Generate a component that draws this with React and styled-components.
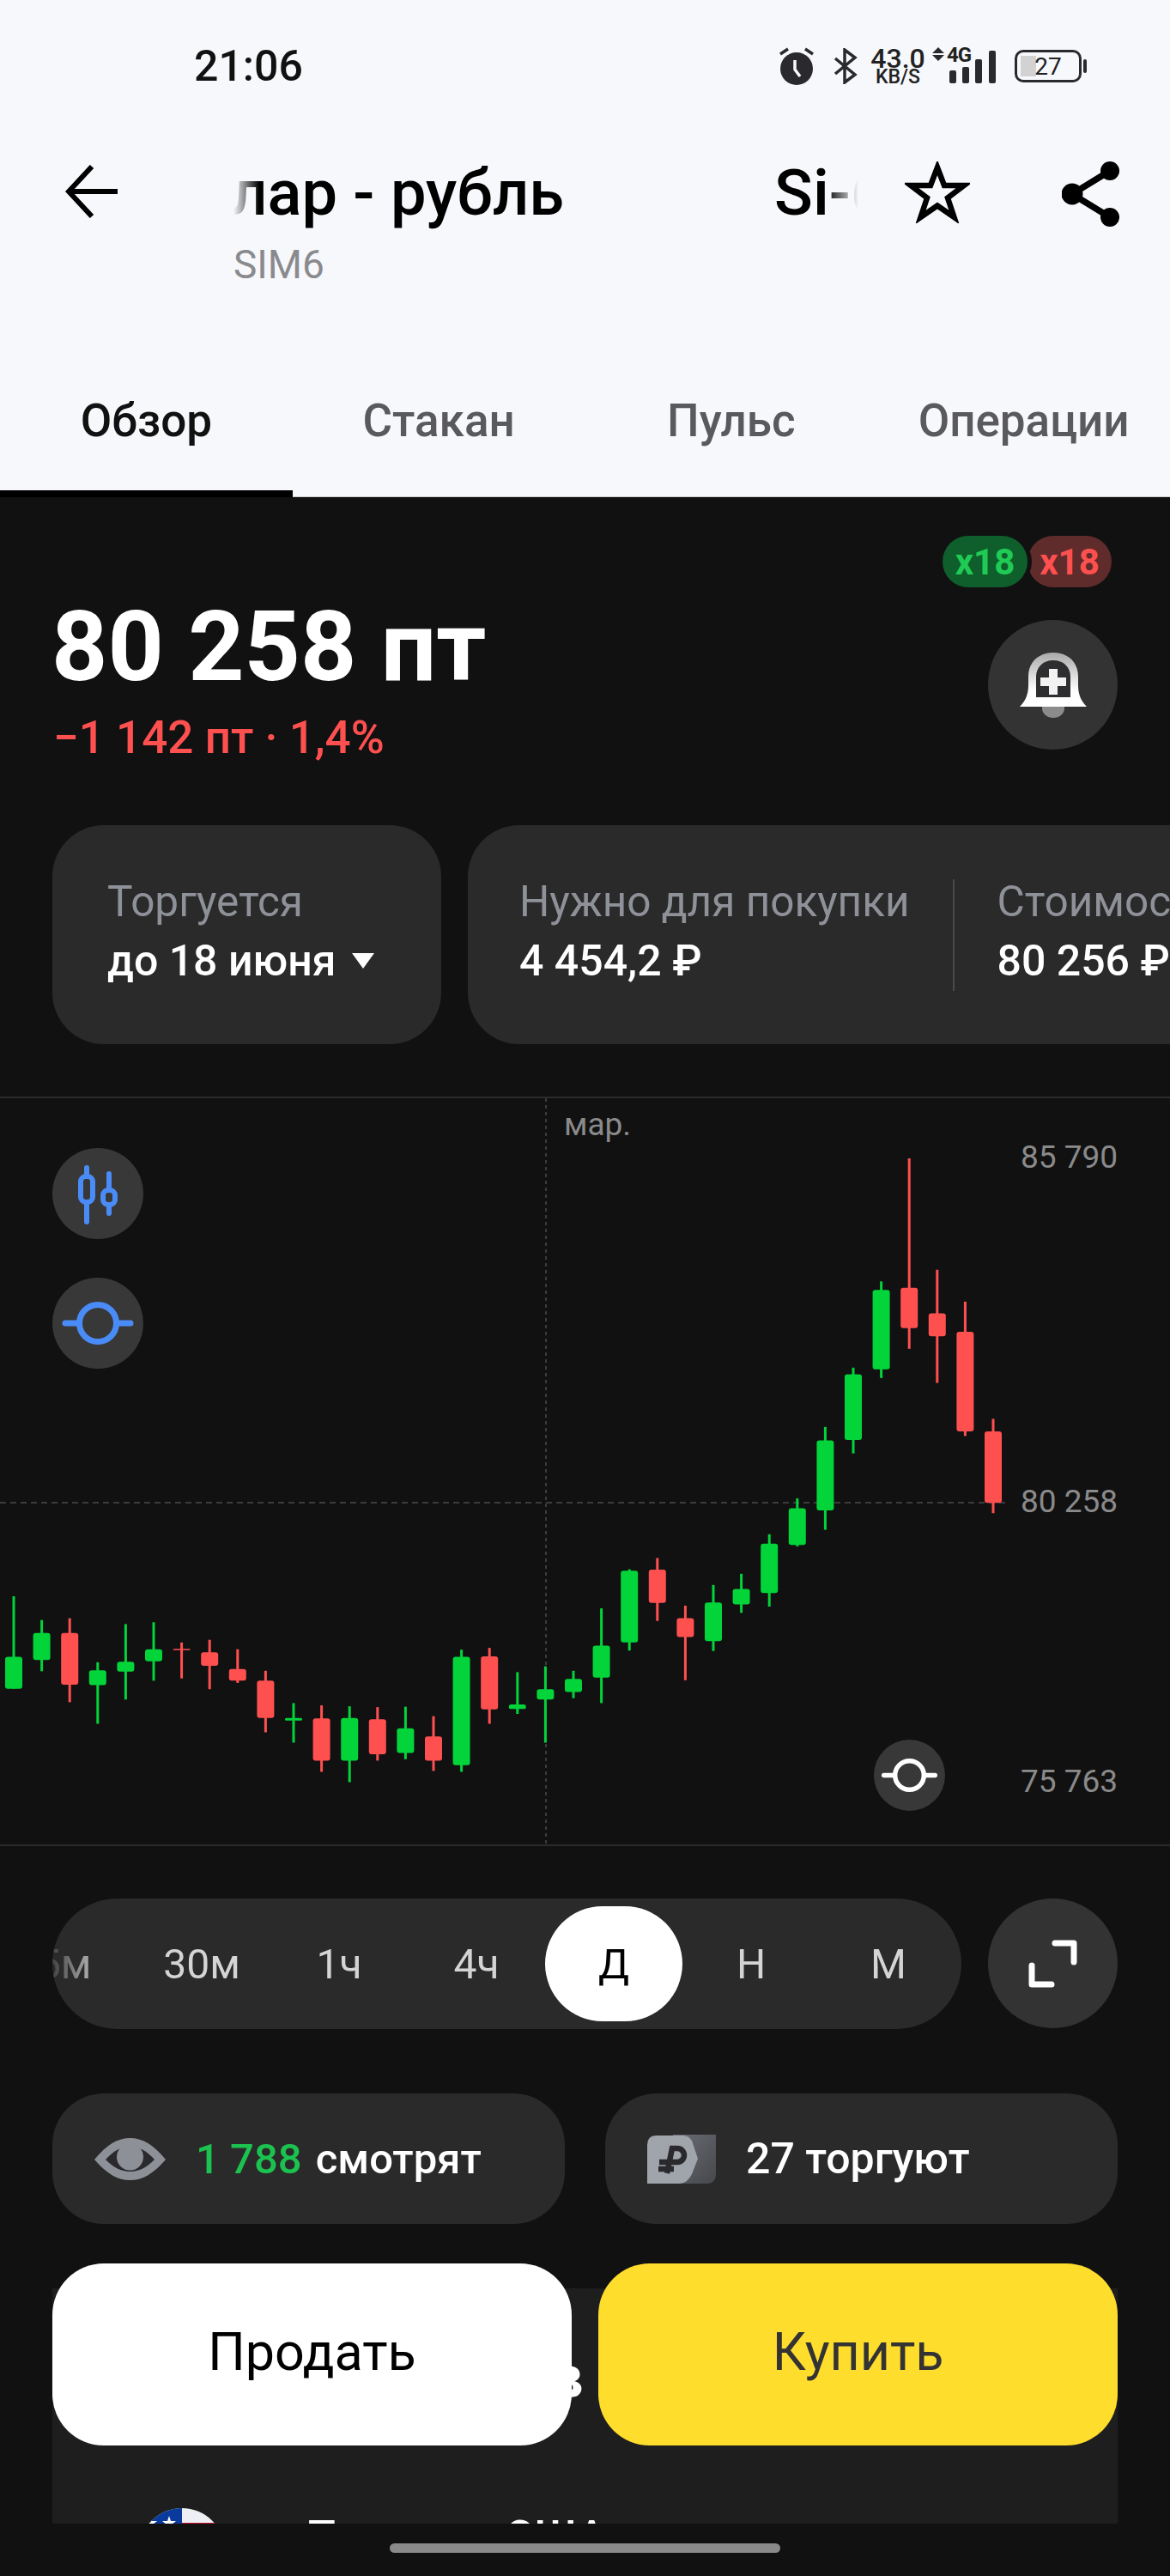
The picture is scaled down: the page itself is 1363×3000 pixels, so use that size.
import React from 'react';
import styled, { createGlobalStyle } from 'styled-components';

const GREEN = '#02d43a';
const RED = '#ff5050';
const BLUE = '#4a8cf7';

// g/r, wick top, body top, body bottom, wick bottom
const CANDLES = [
  ['g', 1107, 1242, 1313, 1313], ['g', 1160, 1189, 1249, 1274], ['r', 1156, 1189, 1304, 1343],
  ['g', 1254, 1272, 1305, 1391], ['g', 1169, 1253, 1275, 1337], ['g', 1165, 1225, 1252, 1295],
  ['r', 1210, 1224, 1227, 1290], ['r', 1204, 1232, 1262, 1314], ['r', 1225, 1269, 1295, 1300],
  ['r', 1273, 1295, 1378, 1410], ['g', 1345, 1378, 1384, 1433], ['r', 1350, 1379, 1473, 1498],
  ['g', 1352, 1378, 1473, 1521], ['r', 1354, 1381, 1459, 1473], ['g', 1353, 1401, 1456, 1470],
  ['r', 1374, 1419, 1473, 1496], ['g', 1226, 1242, 1483, 1498], ['r', 1222, 1241, 1359, 1391],
  ['g', 1276, 1348, 1358, 1369], ['g', 1263, 1314, 1337, 1433], ['g', 1273, 1291, 1320, 1334],
  ['g', 1134, 1217, 1288, 1345], ['g', 1047, 1050, 1210, 1228], ['r', 1022, 1048, 1122, 1162],
  ['r', 1128, 1156, 1198, 1294], ['g', 1082, 1121, 1207, 1229], ['g', 1057, 1091, 1125, 1144],
  ['g', 969, 990, 1100, 1130], ['g', 889, 911, 993, 996], ['g', 730, 760, 916, 959],
  ['g', 598, 613, 759, 789], ['g', 406, 425, 602, 621], ['r', 132, 420, 510, 556],
  ['r', 380, 477, 528, 632], ['r', 451, 518, 740, 750], ['r', 712, 740, 899, 922],
];

const toY = (v) => v / 1.912 + 1;
const PERIODS = ['5м', '30м', '1ч', '4ч', 'Д', 'Н', 'М'];
const TABS = ['Обзор', 'Стакан', 'Пульс', 'Операции'];

const App = () => {
  return (
    <Page>
      <GlobalStyle />
      <TopPanel>
        <StatusBar>
          <Clock>21:06</Clock>
          <StatusIcons>
            <AlarmIcon />
            <BluetoothIcon />
            <Speed>
              <SpeedValue>43.0</SpeedValue>
              <SpeedUnit>KB/S</SpeedUnit>
            </Speed>
            <Network>
              <TrafficIcon />
              <NetworkLabel>4G</NetworkLabel>
              <SignalIcon />
            </Network>
            <Battery>
              <BatteryFill />
              <BatteryText>27</BatteryText>
            </Battery>
          </StatusIcons>
        </StatusBar>

        <NavRow>
          <BackIcon />
          <TitleBlock>
            <TitleTrack>
              <TitleInner>
                <span>Доллар - рубль</span>
                <span>Si-6.26</span>
              </TitleInner>
            </TitleTrack>
            <Ticker>SIM6</Ticker>
          </TitleBlock>
          <NavActions>
            <StarIcon />
            <ShareIcon />
          </NavActions>
        </NavRow>

        <Tabs>
          {TABS.map((tab, i) => (
            <Tab key={tab} $active={i === 0}>{tab}</Tab>
          ))}
        </Tabs>
      </TopPanel>

      <Quote>
        <QuoteInfo>
          <Price>80 258 пт</Price>
          <Change>−1 142 пт · 1,4%</Change>
        </QuoteInfo>
        <QuoteSide>
          <Badges>
            <LongBadge>x18</LongBadge>
            <ShortBadge>x18</ShortBadge>
          </Badges>
          <RoundButton>
            <BellIcon />
          </RoundButton>
        </QuoteSide>
      </Quote>

      <InfoRow>
        <DateCard>
          <InfoCell>
            <InfoLabel>Торгуется</InfoLabel>
            <InfoValue>
              до 18 июня
              <Caret />
            </InfoValue>
          </InfoCell>
        </DateCard>
        <InfoCard>
          <InfoCell>
            <InfoLabel>Нужно для покупки</InfoLabel>
            <InfoValue>4 454,2 ₽</InfoValue>
          </InfoCell>
          <InfoDivider />
          <InfoCell>
            <InfoLabel>Стоимость</InfoLabel>
            <InfoValue>80 256 ₽</InfoValue>
          </InfoCell>
        </InfoCard>
      </InfoRow>

      <Chart>
        <ChartSvg width="1363" height="870">
          <line x1="636" y1="0" x2="636" y2="870" stroke="#3c3c3c" strokeWidth="2" strokeDasharray="4 4" />
          <line x1="0" y1="471" x2="1172" y2="471" stroke="#3c3c3c" strokeWidth="2" strokeDasharray="7 5" />
          {CANDLES.map(([color, wickTop, bodyTop, bodyBottom, wickBottom], i) => {
            const x = 16 + i * 32.6;
            const fill = color === 'g' ? GREEN : RED;
            const height = toY(bodyBottom) - toY(bodyTop);
            return (
              <g key={i} fill={fill}>
                <rect x={x - 1.5} y={toY(wickTop)} width="3" height={toY(wickBottom) - toY(wickTop)} />
                <rect
                  x={x - 10}
                  y={toY(bodyTop)}
                  width="20"
                  height={height}
                  rx={Math.min(3, height / 2)}
                />
              </g>
            );
          })}
        </ChartSvg>
        <MonthLabel>мар.</MonthLabel>
        <AxisLabel $top={69}>85 790</AxisLabel>
        <AxisLabel $top={470}>80 258</AxisLabel>
        <AxisLabel $top={796}>75 763</AxisLabel>
        <ChartTools>
          <ToolButton>
            <CandlesIcon />
          </ToolButton>
          <ToolButton>
            <LevelIcon color={BLUE} />
          </ToolButton>
        </ChartTools>
        <GoToPrice>
          <LevelIcon color="#fff" />
        </GoToPrice>
      </Chart>

      <PeriodRow>
        <PeriodPill>
          <PeriodTrack>
            {PERIODS.map((p) => (
              <Period key={p} $active={p === 'Д'}>{p}</Period>
            ))}
          </PeriodTrack>
        </PeriodPill>
        <RoundButton>
          <ExpandIcon />
        </RoundButton>
      </PeriodRow>

      <StatsRow>
        <StatCard>
          <EyeIcon />
          <StatText $size={49}><Accent>1 788</Accent> смотрят</StatText>
        </StatCard>
        <StatCard>
          <TagIcon />
          <StatText $size={50}>27 торгуют</StatText>
        </StatCard>
      </StatsRow>

      <AssetCard>
        <AssetHeading>в</AssetHeading>
        <AssetRow>
          <FlagIcon />
          <AssetName>Товары США</AssetName>
        </AssetRow>
      </AssetCard>

      <TradeButtons>
        <SellButton>Продать</SellButton>
        <BuyButton>Купить</BuyButton>
      </TradeButtons>

      <SystemBar>
        <HomeIndicator />
      </SystemBar>
    </Page>
  );
};

const AlarmIcon = () => (
  <AlarmSvg width="44" height="46" viewBox="0 0 44 46">
    <circle cx="22" cy="26" r="19" fill="#2a2a2e" />
    <path d="M3 9 L12 3 M41 9 L32 3" stroke="#2a2a2e" strokeWidth="3.5" />
    <path d="M20 16 V27 L26 35" stroke="#f6f8fb" strokeWidth="3.5" fill="none" />
  </AlarmSvg>
);

const BluetoothIcon = () => (
  <svg width="28" height="42" viewBox="0 0 28 42" fill="none" stroke="#2a2a2e" strokeWidth="3.5">
    <path d="M2 12 L25 31 L13 40 V2 L25 11 L2 30" />
  </svg>
);

const TrafficIcon = () => (
  <TrafficSvg width="14" height="16" viewBox="0 0 14 16" fill="#2a2a2e">
    <path d="M7 0 L14 7 H0 Z M0 9 H14 L7 16 Z" />
  </TrafficSvg>
);

const SignalIcon = () => (
  <svg width="56" height="38" viewBox="0 0 56 38" fill="#2a2a2e">
    <rect x="0" y="23" width="8" height="15" rx="2" />
    <rect x="15" y="19" width="8" height="19" rx="2" />
    <rect x="30" y="10" width="8" height="28" rx="2" />
    <rect x="46" y="0" width="8" height="38" rx="2" />
  </svg>
);

const BackIcon = () => (
  <NavIcon width="62" height="62" viewBox="0 0 62 62" fill="none" stroke="#000" strokeWidth="6">
    <path d="M61 31 H4 M31 2 L4 31 L31 60" />
  </NavIcon>
);

const StarIcon = () => (
  <svg width="76" height="72" viewBox="0 0 76 72" fill="none" stroke="#000" strokeWidth="6.5" strokeLinejoin="miter">
    <path d="M38 7 L46 28 H69 L50 42.5 L57.5 65 L38 51.5 L18.5 65 L26 42.5 L7 28 H30 Z" />
  </svg>
);

const ShareIcon = () => (
  <svg width="68" height="76" viewBox="0 0 68 76" fill="#000">
    <path d="M56 11 L12 38 L56 65" fill="none" stroke="#000" strokeWidth="7.5" />
    <circle cx="56" cy="11" r="11" />
    <circle cx="12" cy="38" r="12.5" />
    <circle cx="56" cy="65" r="11" />
  </svg>
);

const BellIcon = () => (
  <svg width="80" height="80" viewBox="0 0 80 80">
    <defs>
      <linearGradient id="bell" x1="0" y1="0" x2="0" y2="1">
        <stop offset="0" stopColor="#a9a9a9" />
        <stop offset="0.7" stopColor="#fff" />
      </linearGradient>
    </defs>
    <path d="M27 65 H53 V67 A13 11 0 0 1 27 67 Z" fill="#8b8b8b" />
    <path
      d="M1 65 C8 58 11 50 11 40 V30 C11 12 24 2 40 2 C56 2 69 12 69 30 V40 C69 50 72 58 79 65 Z"
      fill="url(#bell)"
    />
    <path d="M20 54 V30 C20 19 28 11 40 11 C52 11 60 19 60 30 V54 Z" fill="#2e2e30" />
    <path d="M35 21 H45 V31 H55 V41 H45 V51 H35 V41 H25 V31 H35 Z" fill="#f2f2f2" />
  </svg>
);

const CandlesIcon = () => (
  <svg width="106" height="106" viewBox="0 0 106 106" fill="#383838" stroke={BLUE} strokeWidth="6" strokeLinecap="round">
    <path d="M40 23 V86 M66 30 V76" />
    <rect x="33" y="33" width="14" height="30" rx="6" />
    <rect x="59" y="49" width="14" height="17" rx="6" />
  </svg>
);

const LevelIcon = ({ color }) => (
  <svg width="100%" height="100%" viewBox="0 0 106 106" fill="none" stroke={color} strokeWidth="7">
    <circle cx="53" cy="53" r="21.5" />
    <path d="M15 53 H31 M75 53 H91" strokeLinecap="round" />
  </svg>
);

const ExpandIcon = () => (
  <svg width="58" height="56" viewBox="0 0 58 56" fill="none" stroke="#fff" strokeWidth="7" strokeLinejoin="round" strokeLinecap="round">
    <path d="M31 4 H53 V26 M4 30 V52 H27" />
  </svg>
);

const EyeIcon = () => (
  <svg width="83" height="49" viewBox="0 0 83 49">
    <path d="M0 25 C15 7 27 0 41.5 0 C56 0 68 7 83 25 C68 42 56 49 41.5 49 C27 49 15 42 0 25 Z" fill="#8d9096" />
    <path d="M13 25 C22 15 31 10 41.5 10 C52 10 61 15 70 25 C61 34 52 39 41.5 39 C31 39 22 34 13 25 Z" fill="#2a2a2e" />
    <circle cx="41.5" cy="22" r="15.5" fill="#8d9096" />
  </svg>
);

const TagIcon = () => (
  <svg width="80" height="57" viewBox="0 0 80 57">
    <defs>
      <linearGradient id="tagBack" x1="0" y1="0" x2="1" y2="1">
        <stop offset="0" stopColor="#6a6d72" />
        <stop offset="1" stopColor="#46484c" />
      </linearGradient>
    </defs>
    <path d="M30 0 H80 V46 Q80 57 69 57 H30 Z" fill="url(#tagBack)" />
    <path d="M11 1 H42 Q48 1 52 7 L59 28 L52 46 Q46 57 38 57 H0 V12 Q0 1 11 1 Z" fill="#a0a4ab" />
    <path d="M23 45 L29 16 H35 A8 8 0 0 1 35 32 H14 M13 40 H31" fill="none" stroke="#2a2a2e" strokeWidth="6.5" />
  </svg>
);

const FlagIcon = () => (
  <svg width="100" height="100" viewBox="0 0 100 100">
    <defs>
      <clipPath id="flagClip">
        <circle cx="50" cy="50" r="50" />
      </clipPath>
    </defs>
    <g clipPath="url(#flagClip)">
      <rect width="100" height="100" fill="#eef0f5" />
      <rect x="50" y="17" width="50" height="8" fill="#c8102e" />
      <rect width="50" height="50" fill="#0a3a9c" />
      <path d="M13 9 l2 6 h6 l-5 4 l2 6 l-5 -4 l-5 4 l2 -6 l-5 -4 h6 Z" fill="#fff" />
      <path d="M35 9 l2 6 h6 l-5 4 l2 6 l-5 -4 l-5 4 l2 -6 l-5 -4 h6 Z" fill="#fff" />
    </g>
  </svg>
);

const GlobalStyle = createGlobalStyle`
  html, body {
    margin: 0;
    padding: 0;
    background: #111112;
  }
  * {
    box-sizing: border-box;
  }
`;

const Page = styled.div`
  position: relative;
  width: 1363px;
  height: 3000px;
  overflow: hidden;
  background: #111112;
  color: #fff;
  font-family: Roboto, "Noto Sans", sans-serif;
`;

const TopPanel = styled.header`
  height: 579px;
  background: #f6f8fb;
  color: #000;
  display: flex;
  flex-direction: column;
`;

const StatusBar = styled.div`
  height: 154px;
  flex: none;
  display: flex;
  align-items: center;
  justify-content: space-between;
  padding: 0 103px 0 226px;
`;

const Clock = styled.div`
  font-size: 50px;
  font-weight: 500;
  color: #111;
`;

const StatusIcons = styled.div`
  display: flex;
  align-items: center;
  gap: 15px;
  color: #222;
`;

const AlarmSvg = styled.svg`
  margin-right: 6px;
`;

const Speed = styled.div`
  width: 64px;
  display: flex;
  flex-direction: column;
  align-items: center;
  line-height: 1;
`;

const SpeedValue = styled.div`
  font-size: 32px;
  font-weight: 500;
  height: 26px;
  line-height: 26px;
`;

const SpeedUnit = styled.div`
  font-size: 23px;
  font-weight: 500;
  line-height: 18px;
`;

const Network = styled.div`
  position: relative;
  width: 56px;
  height: 40px;
  margin-left: 13px;
  margin-right: 5px;
  > svg:last-child {
    position: absolute;
    right: 0;
    bottom: 0;
  }
`;

const TrafficSvg = styled.svg`
  position: absolute;
  left: -20px;
  top: -2px;
`;

const NetworkLabel = styled.span`
  position: absolute;
  left: -3px;
  top: -4px;
  font-size: 24px;
  font-weight: 700;
  letter-spacing: -1px;
  line-height: 22px;
`;

const Battery = styled.div`
  position: relative;
  width: 78px;
  height: 38px;
  border: 3px solid #2a2a2e;
  border-radius: 10px;
  display: flex;
  align-items: center;
  justify-content: center;
  &::after {
    content: '';
    position: absolute;
    right: -9px;
    top: 8px;
    width: 4px;
    height: 16px;
    background: #2a2a2e;
    border-radius: 2px;
  }
`;

const BatteryFill = styled.div`
  position: absolute;
  left: 4px;
  top: 4px;
  bottom: 4px;
  width: 18px;
  background: #d2d2d2;
`;

const BatteryText = styled.span`
  position: relative;
  font-size: 28px;
  color: #222;
`;

const NavRow = styled.div`
  flex: 1;
  display: flex;
  align-items: flex-start;
  padding: 34px 58px 0 76px;
`;

const NavIcon = styled.svg`
  flex: none;
  margin-top: 4px;
`;

const TitleBlock = styled.div`
  width: 728px;
  margin-left: 134px;
  margin-top: -8px;
`;

const TitleTrack = styled.div`
  height: 90px;
  overflow: hidden;
  mask-image: linear-gradient(to right, transparent 0, #000 30px, #000 690px, transparent 100%);
`;

const TitleInner = styled.div`
  display: flex;
  gap: 245px;
  margin-left: -142px;
  white-space: nowrap;
  font-size: 74px;
  font-weight: 500;
  line-height: 90px;
`;

const Ticker = styled.div`
  margin-top: 12px;
  font-size: 46px;
  line-height: 52px;
  color: #8a8a8e;
`;

const NavActions = styled.div`
  display: flex;
  gap: 107px;
  margin-left: 54px;
`;

const Tabs = styled.nav`
  flex: none;
  display: grid;
  grid-template-columns: repeat(4, 1fr);
  box-shadow: inset 0 -1px 0 #cfcfd2;
`;

const Tab = styled.div`
  height: 139px;
  padding-bottom: 39px;
  display: flex;
  align-items: center;
  justify-content: center;
  font-size: 53px;
  font-weight: 500;
  color: ${(p) => (p.$active ? '#111' : '#5a5a5d')};
  box-shadow: ${(p) => (p.$active ? 'inset 0 -8px 0 #000' : 'none')};
`;

const Quote = styled.section`
  height: 382px;
  display: flex;
  justify-content: space-between;
  padding: 45px 61px 0 60px;
`;

const QuoteInfo = styled.div`
  padding-top: 62px;
`;

const Price = styled.div`
  font-size: 114px;
  font-weight: 700;
  line-height: 134px;
`;

const Change = styled.div`
  font-size: 53px;
  font-weight: 500;
  line-height: 62px;
  color: ${RED};
  margin-top: 8px;
  margin-left: 2px;
`;

const QuoteSide = styled.div`
  display: flex;
  flex-direction: column;
  align-items: flex-end;
  gap: 38px;
`;

const Badges = styled.div`
  display: flex;
  margin-right: 7px;
`;

const LongBadge = styled.div`
  position: relative;
  z-index: 1;
  width: 99px;
  height: 60px;
  border-radius: 30px;
  background: #0f5f2c;
  color: #1fcb55;
  font-size: 42px;
  font-weight: 700;
  display: flex;
  align-items: center;
  justify-content: center;
  box-shadow: 0 0 0 5px #111112;
`;

const ShortBadge = styled(LongBadge)`
  z-index: 0;
  width: 98px;
  background: #5f2b2b;
  color: ${RED};
  box-shadow: none;
`;

const RoundButton = styled.div`
  flex: none;
  width: 151px;
  height: 151px;
  border-radius: 50%;
  background: #333334;
  display: flex;
  align-items: center;
  justify-content: center;
`;

const InfoRow = styled.section`
  display: flex;
  gap: 31px;
  padding-left: 61px;
`;

const InfoCard = styled.div`
  flex: none;
  height: 255px;
  display: flex;
  align-items: center;
  padding: 0 64px 10px 60px;
  border-radius: 60px;
  background: #2a2a2b;
`;

const DateCard = styled(InfoCard)`
  width: 453px;
  padding-left: 64px;
  padding-right: 0;
`;

const InfoCell = styled.div`
  display: flex;
  flex-direction: column;
  gap: 14px;
`;

const InfoLabel = styled.div`
  font-size: 49.5px;
  line-height: 56px;
  color: #8e9198;
  white-space: nowrap;
`;

const InfoValue = styled.div`
  display: flex;
  align-items: center;
  font-size: 50px;
  font-weight: 500;
  line-height: 54px;
  white-space: nowrap;
`;

const Caret = styled.span`
  width: 0;
  height: 0;
  margin-left: 19px;
  border-left: 13px solid transparent;
  border-right: 13px solid transparent;
  border-top: 18px solid #fff;
`;

const InfoDivider = styled.div`
  width: 2px;
  height: 130px;
  margin: 10px 50px 0;
  background: #4a4a4b;
`;

const Chart = styled.section`
  position: relative;
  height: 873px;
  margin-top: 61px;
  border-top: 2px solid #2b2b2c;
  border-bottom: 2px solid #2b2b2c;
`;

const ChartSvg = styled.svg`
  position: absolute;
  left: 0;
  top: 0;
`;

const MonthLabel = styled.div`
  position: absolute;
  left: 657px;
  top: 10px;
  font-size: 37px;
  line-height: 42px;
  color: #8a8a8a;
`;

const AxisLabel = styled.div`
  position: absolute;
  left: 1189px;
  top: ${(p) => p.$top}px;
  transform: translateY(-50%);
  font-size: 37px;
  line-height: 44px;
  color: #8a8a8a;
`;

const ChartTools = styled.div`
  position: absolute;
  left: 61px;
  top: 58px;
  display: flex;
  flex-direction: column;
  gap: 45px;
`;

const ToolButton = styled.div`
  width: 106px;
  height: 106px;
  border-radius: 50%;
  background: #383838;
`;

const GoToPrice = styled.div`
  position: absolute;
  left: 1018px;
  top: 747px;
  width: 83px;
  height: 83px;
  border-radius: 50%;
  background: #383838;
`;

const PeriodRow = styled.section`
  display: flex;
  gap: 31px;
  padding: 61px 61px 0;
`;

const PeriodPill = styled.div`
  width: 1059px;
  height: 152px;
  border-radius: 76px;
  background: #2a2a2b;
  overflow: hidden;
  display: flex;
  align-items: center;
`;

const PeriodTrack = styled.div`
  display: flex;
  align-items: center;
  width: 100%;
  mask-image: linear-gradient(to right, rgba(0, 0, 0, 0.15) 0, #000 60px);
`;

const Period = styled.div`
  flex: none;
  width: 160px;
  height: 134px;
  border-radius: 67px;
  display: flex;
  align-items: center;
  justify-content: center;
  font-size: 48px;
  color: ${(p) => (p.$active ? '#000' : '#d4d4d4')};
  background: ${(p) => (p.$active ? '#fff' : 'transparent')};
  &:first-child {
    margin-left: -66px;
  }
`;

const StatsRow = styled.section`
  display: flex;
  gap: 47px;
  padding: 75px 61px 0;
`;

const StatCard = styled.div`
  flex: 1;
  height: 152px;
  display: flex;
  align-items: center;
  gap: 35px;
  padding-left: 49px;
  border-radius: 60px;
  background: #2a2a2b;
`;

const StatText = styled.div`
  font-size: ${(p) => p.$size}px;
  font-weight: 500;
  white-space: nowrap;
`;

const Accent = styled.span`
  color: #1cc24f;
  margin-right: 4px;
`;

const AssetCard = styled.section`
  height: 336px;
  margin: 75px 61px 0;
  background: #1e1e1f;
`;

const AssetHeading = styled.div`
  padding: 63px 0 0 579px;
  font-size: 70px;
  font-weight: 700;
  line-height: 80px;
`;

const AssetRow = styled.div`
  display: flex;
  align-items: flex-start;
  gap: 97px;
  margin-top: 113px;
  padding-left: 101px;
`;

const AssetName = styled.div`
  font-size: 52px;
  font-weight: 500;
  line-height: 52px;
  word-spacing: 30px;
  margin-top: 8px;
`;

const TradeButtons = styled.div`
  position: absolute;
  left: 61px;
  right: 61px;
  top: 2636px;
  display: flex;
  gap: 31px;
`;

const SellButton = styled.div`
  flex: 1;
  height: 212px;
  padding-bottom: 6px;
  border-radius: 60px;
  background: #fff;
  color: #000;
  display: flex;
  align-items: center;
  justify-content: center;
  font-size: 61px;
`;

const BuyButton = styled(SellButton)`
  background: #ffdd2d;
  color: #333;
`;

const SystemBar = styled.div`
  position: absolute;
  left: 0;
  right: 0;
  bottom: 0;
  height: 61px;
  background: #111112;
  padding: 23px 0 0 454px;
`;

const HomeIndicator = styled.div`
  width: 455px;
  height: 11px;
  border-radius: 6px;
  background: #8a8a8a;
`;

export default App;
